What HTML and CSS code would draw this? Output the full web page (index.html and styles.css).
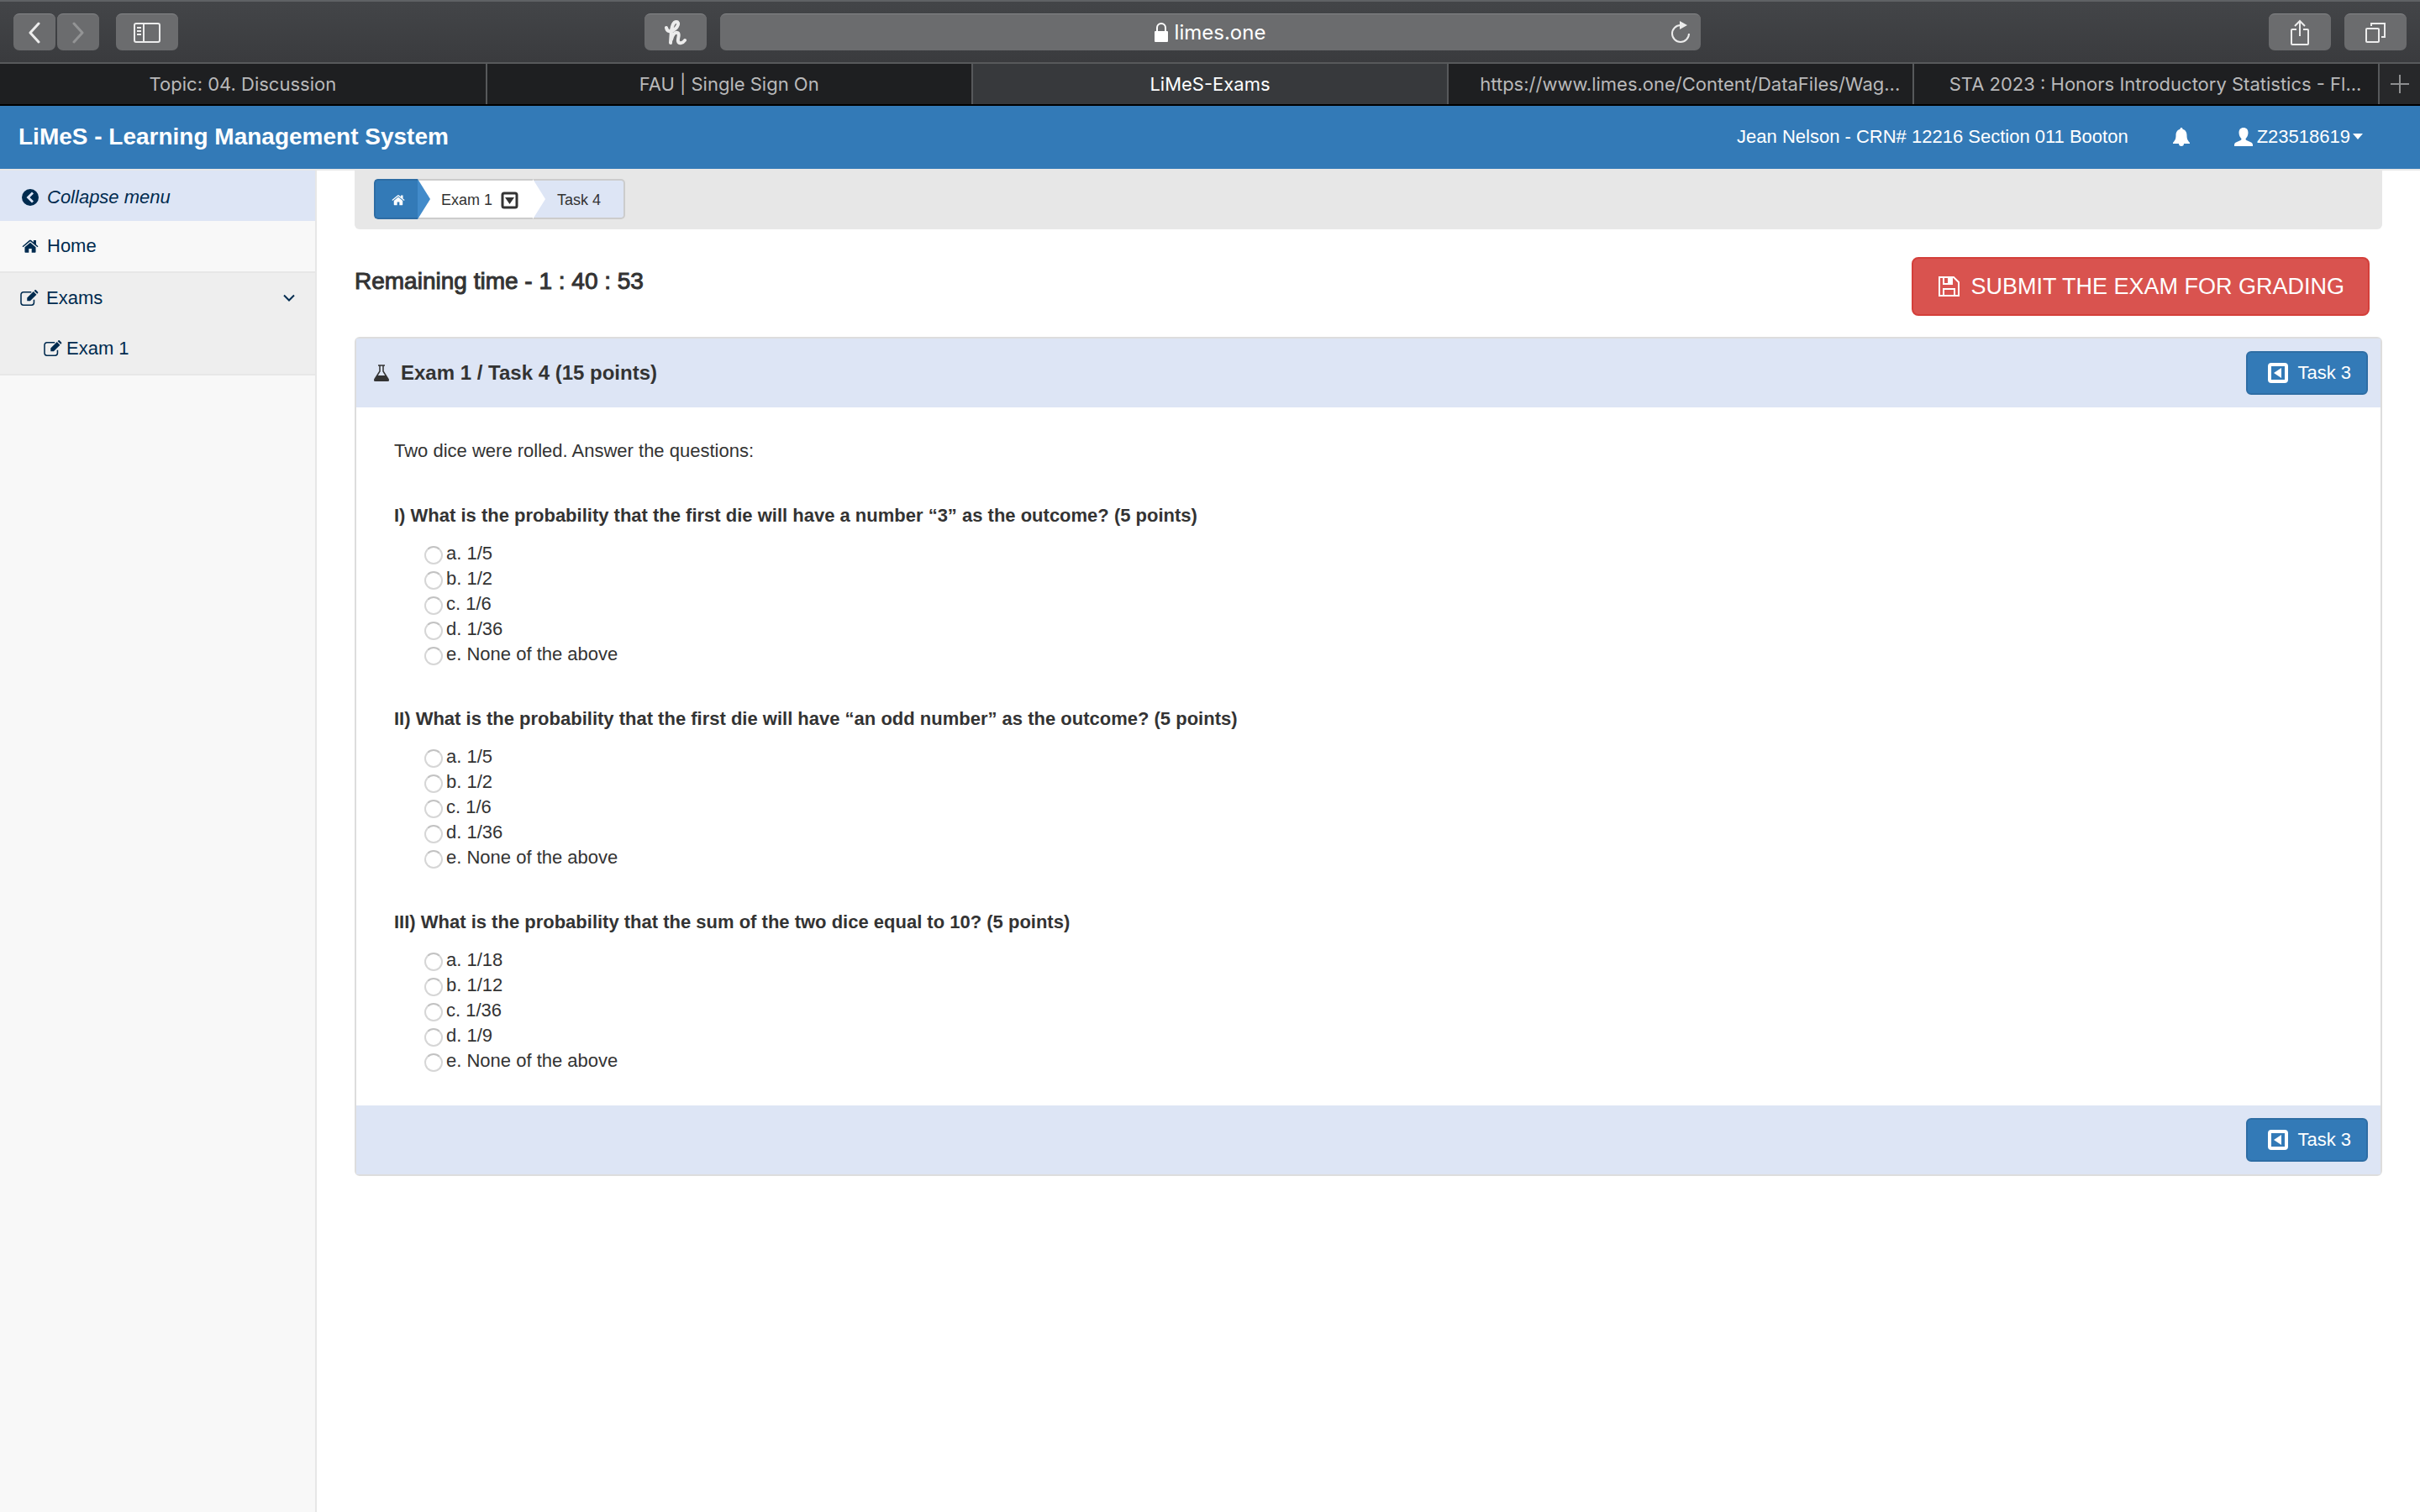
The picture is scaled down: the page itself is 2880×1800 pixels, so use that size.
FILE: index.html
```html
<!DOCTYPE html>
<html lang="en">

<head>
    <meta charset="UTF-8">
    <title>LiMeS-Exams</title>
    <link rel="stylesheet" href="styles.css">
</head>

<body>
    <svg class="sprite" aria-hidden="true">
        <symbol id="i-home" viewBox="0 0 26 22">
            <path d="M13 5.5 4.500 12.600V20c0 .6.4 1 1 1h5.300v-6h4.400v6h5.300c.6 0 1-.4 1-1v-7.400z" />
            <path d="m25.300 11.200-3.300-2.800V2h-4v3.100L14.400 2c-.8-.7-2-.7-2.800 0L.7 11.200l1.200 1.500L13 3.500l11.100 9.200z" />
        </symbol>
        <symbol id="i-edit" viewBox="0 0 24 22">
            <path d="M18 13v3.800a3.200 3.200 0 0 1-3.200 3.200H4.200A3.200 3.200 0 0 1 1 16.800V6.200A3.200 3.200 0 0 1 4.200 3h10.300" fill="none" stroke="currentColor" stroke-width="1.700" />
            <path d="M9 10.500 17.300 2.200l4 4L13 14.500H9zM18.200 1.300l.8-.8c.5-.5 1.300-.5 1.800 0l2.200 2.200c.5.5.5 1.300 0 1.800l-.8.8z" />
        </symbol>
        <symbol id="i-prev" viewBox="0 0 24 24">
            <path fill-rule="evenodd" d="M4 0h16a4 4 0 0 1 4 4v16a4 4 0 0 1-4 4H4a4 4 0 0 1-4-4V4a4 4 0 0 1 4-4zm0 4v16h16V4z" />
            <path d="M16 6v12l-9-6z" />
        </symbol>
    </svg>

    <div class="toolbar">
        <button class="tool tool-nav" aria-label="Back"><svg width="16" height="26" viewBox="0 0 16 26"><path d="M13 2 3 13l10 11" fill="none" stroke="currentColor" stroke-width="3" stroke-linecap="round" stroke-linejoin="round" /></svg></button>
        <button class="tool tool-nav tool-off" aria-label="Forward"><svg width="16" height="26" viewBox="0 0 16 26"><path d="m3 2 10 11L3 24" fill="none" stroke="currentColor" stroke-width="3" stroke-linecap="round" stroke-linejoin="round" /></svg></button>
        <button class="tool tool-side" aria-label="Show sidebar"><svg width="32" height="26" viewBox="0 0 32 26"><path d="M3 2h26a2 2 0 0 1 2 2v18a2 2 0 0 1-2 2H3a2 2 0 0 1-2-2V4a2 2 0 0 1 2-2zM12 2v22M4 7h5M4 11h5M4 15h5" fill="none" stroke="currentColor" stroke-width="2" /></svg></button>
        <div class="address-wrap">
            <button class="tool tool-ext" aria-label="Honey"><svg width="26" height="30" viewBox="0 0 26 30"><path d="M2 9c1 5 5 5 8 3 6-3 8-10 4-10-4 0-5 5-6 10l-1 15M8 23c1-5 4-9 7-8 4 1 0 7 1 10 1 4 6 2 8-1" fill="none" stroke="currentColor" stroke-width="4" stroke-linecap="round" stroke-linejoin="round" /></svg></button>
            <div class="address">
                <span class="address-url"><svg width="16" height="24" viewBox="0 0 16 24"><path d="M3 11V6a5 5 0 0 1 10 0v5" fill="none" stroke="currentColor" stroke-width="2" /><rect y="10" width="16" height="13" rx="1" fill="currentColor" /></svg>limes.one</span>
                <button class="reload" aria-label="Reload"><svg width="24" height="28" viewBox="0 0 24 28"><path d="M12 5a10 10 0 1 0 10 10" fill="none" stroke="currentColor" stroke-width="2" /><path d="M11 0v10l9-5z" fill="currentColor" /></svg></button>
            </div>
        </div>
        <button class="tool" aria-label="Share"><svg width="24" height="32" viewBox="0 0 24 32"><path d="M8 12H3a1 1 0 0 0-1 1v16a1 1 0 0 0 1 1h18a1 1 0 0 0 1-1V13a1 1 0 0 0-1-1h-5M12 20V2M6 8l6-6 6 6" fill="none" stroke="currentColor" stroke-width="2" /></svg></button>
        <button class="tool" aria-label="Show all tabs"><svg width="26" height="26" viewBox="0 0 26 26"><path d="M3 8h13a1 1 0 0 1 1 1v14a1 1 0 0 1-1 1H3a1 1 0 0 1-1-1V9a1 1 0 0 1 1-1zM8 5V2h16v16h-4" fill="none" stroke="currentColor" stroke-width="2" /></svg></button>
    </div>

    <nav class="tabs">
        <a class="tab" href="#">Topic: 04. Discussion</a>
        <a class="tab" href="#">FAU | Single Sign On</a>
        <a class="tab tab-active" href="#">LiMeS-Exams</a>
        <a class="tab tab-long" href="#">https://www.limes.one/Content/DataFiles/Wag...</a>
        <a class="tab tab-long" href="#">STA 2023 : Honors Introductory Statistics - Fl...</a>
        <button class="tab-new" aria-label="New tab"><svg width="22" height="22" viewBox="0 0 22 22"><path d="M11 0v22M0 11h22" stroke="currentColor" stroke-width="2" /></svg></button>
    </nav>

    <header class="navbar">
        <a class="brand" href="#">LiMeS - Learning Management System</a>
        <span class="course">Jean Nelson - CRN# 12216 Section 011 Booton</span>
        <a class="bell" href="#" aria-label="Notifications"><svg width="22" height="22" viewBox="0 0 22 22"><path d="M11 0c1 0 1.500.7 1.500 1.700C16 2.500 17.500 5.500 17.500 9c0 5 1.500 6.500 3.500 9v1H1v-1c2-2.500 3.500-4 3.500-9 0-3.500 1.500-6.500 5-7.300C9.500.7 10 0 11 0zM8 19h6a3 3 0 0 1-6 0z" fill="currentColor" /></svg></a>
        <a class="user" href="#"><svg width="22" height="22" viewBox="0 0 22 22"><path d="M11 0c3.500 0 5.500 2.300 5.500 6 0 3-1.300 5.300-2.700 6.700-.5.700-.3 1.700.7 2.300l5 2.300c1.500.7 2.500 1.700 2.500 3.200V22H0v-1.500c0-1.500 1-2.500 2.500-3.200l5-2.300c1-.6 1.200-1.600.7-2.300C6.800 11.300 5.500 9 5.500 6c0-3.700 2-6 5.500-6z" fill="currentColor" /></svg>Z23518619<span class="caret"></span></a>
    </header>

    <div class="page">
        <nav class="sidebar">
            <a class="side-item side-collapse" href="#"><svg width="20" height="20" viewBox="0 0 20 20"><path fill-rule="evenodd" d="M10 0a10 10 0 1 1 0 20 10 10 0 0 1 0-20zm2 3.500L5.500 10l6.500 6.500 2-2L9.500 10 14 5.500z" /></svg>Collapse menu</a>
            <a class="side-item" href="#"><svg width="20" height="18"><use href="#i-home" /></svg>Home</a>
            <div class="side-group">
                <a class="side-item" href="#"><svg width="22" height="20"><use href="#i-edit" /></svg>Exams<svg class="chevron" width="14" height="10" viewBox="0 0 14 10"><path d="m1 1.500 6 6 6-6" fill="none" stroke="currentColor" stroke-width="2" /></svg></a>
                <a class="side-item side-sub" href="#"><svg width="22" height="20"><use href="#i-edit" /></svg>Exam 1</a>
            </div>
        </nav>

        <main class="content">
            <div class="crumb-bar">
                <div class="crumbs">
                    <a class="crumb crumb-home" href="#" aria-label="Home"><svg width="16" height="14"><use href="#i-home" /></svg></a>
                    <a class="crumb crumb-exam" href="#">Exam 1<svg width="21" height="21" viewBox="0 0 21 21"><rect x="2" y="2" width="17" height="17" rx="2" fill="none" stroke="currentColor" stroke-width="3" /><path d="M5 7h11l-5.500 8z" fill="currentColor" /></svg></a>
                    <span class="crumb crumb-task">Task 4</span>
                </div>
            </div>

            <div class="status">
                <h3 class="remaining">Remaining time - 1 : 40 : 53</h3>
                <button class="btn btn-danger"><svg width="25" height="24" viewBox="0 0 25 24"><path d="M1 1h17l6 6v16H1zM6 23v-8h13v8M6 1v8h10V1" fill="none" stroke="currentColor" stroke-width="2" /><path d="M11 2h4v6h-4z" fill="currentColor" /></svg>SUBMIT THE EXAM FOR GRADING</button>
            </div>

            <section class="panel">
                <div class="panel-bar">
                    <h4 class="panel-title"><svg width="20" height="20" viewBox="0 0 20 20"><path d="M6 1h8M8 1v7L2 17.500c-.6 1 0 1.700 1 1.700h14c1 0 1.600-.7 1-1.700L12 8V1" fill="none" stroke="currentColor" stroke-width="1.500" /><path d="M5 13h10l4 6.500H1z" /></svg>Exam 1 / Task 4 (15 points)</h4>
                    <button class="btn btn-primary"><svg width="24" height="24"><use href="#i-prev" /></svg>Task 3</button>
                </div>

                <form class="panel-body">
                    <p class="intro">Two dice were rolled. Answer the questions:</p>

                    <fieldset class="question">
                        <legend>I) What is the probability that the first die will have a number “3” as the outcome? (5 points)</legend>
                        <label class="option"><input type="radio" name="q1">a. 1/5</label>
                        <label class="option"><input type="radio" name="q1">b. 1/2</label>
                        <label class="option"><input type="radio" name="q1">c. 1/6</label>
                        <label class="option"><input type="radio" name="q1">d. 1/36</label>
                        <label class="option"><input type="radio" name="q1">e. None of the above</label>
                    </fieldset>

                    <fieldset class="question">
                        <legend>II) What is the probability that the first die will have “an odd number” as the outcome? (5 points)</legend>
                        <label class="option"><input type="radio" name="q2">a. 1/5</label>
                        <label class="option"><input type="radio" name="q2">b. 1/2</label>
                        <label class="option"><input type="radio" name="q2">c. 1/6</label>
                        <label class="option"><input type="radio" name="q2">d. 1/36</label>
                        <label class="option"><input type="radio" name="q2">e. None of the above</label>
                    </fieldset>

                    <fieldset class="question">
                        <legend>III) What is the probability that the sum of the two dice equal to 10? (5 points)</legend>
                        <label class="option"><input type="radio" name="q3">a. 1/18</label>
                        <label class="option"><input type="radio" name="q3">b. 1/12</label>
                        <label class="option"><input type="radio" name="q3">c. 1/36</label>
                        <label class="option"><input type="radio" name="q3">d. 1/9</label>
                        <label class="option"><input type="radio" name="q3">e. None of the above</label>
                    </fieldset>
                </form>

                <div class="panel-bar panel-footer">
                    <button class="btn btn-primary"><svg width="24" height="24"><use href="#i-prev" /></svg>Task 3</button>
                </div>
            </section>
        </main>
    </div>
</body>

</html>
```

FILE: styles.css
```css
* {
    box-sizing: border-box;
}

body {
    margin: 0;
    min-height: 100vh;
    display: flex;
    flex-direction: column;
    background: #fff;
    color: #333;
    font-family: "Liberation Sans", Arial, sans-serif;
    font-size: 22px;
    line-height: 30px;
}

a {
    color: inherit;
    text-decoration: none;
}

button {
    font-family: inherit;
    cursor: pointer;
}

svg {
    flex: none;
    fill: currentColor;
}

.sprite {
    display: none;
}

/* Browser toolbar */
.toolbar {
    display: flex;
    align-items: center;
    height: 76px;
    padding: 0 16px;
    gap: 16px;
    background: linear-gradient(#434548, #3a3b3e);
    border-top: 2px solid #5f6265;
    border-bottom: 2px solid #57595b;
    color: #ececec;
}

.tool {
    display: flex;
    align-items: center;
    justify-content: center;
    width: 74px;
    height: 44px;
    padding: 0;
    border: 0;
    border-top: 1px solid #858688;
    border-radius: 7px;
    background: #6b6c6e;
    color: inherit;
}

.tool-nav {
    width: 50px;
}

.tool-off {
    margin-left: -14px;
    color: #939495;
}

.tool-side {
    margin-left: 4px;
}

.address-wrap {
    flex: 1;
    display: flex;
    justify-content: center;
    gap: 16px;
    padding-right: 122px;
}

.address {
    display: flex;
    align-items: center;
    width: 50%;
    height: 44px;
    padding: 0 12px;
    border-top: 1px solid #858688;
    border-radius: 7px;
    background: #6b6c6e;
}

.address-url {
    flex: 1;
    display: flex;
    align-items: center;
    justify-content: center;
    gap: 8px;
    padding-left: 24px;
    color: #fff;
    font-family: Inter, sans-serif;
    font-size: 24px;
}

.reload {
    display: flex;
    padding: 0;
    border: 0;
    background: none;
    color: inherit;
}

/* Tabs */
.tabs {
    display: grid;
    grid-template-columns: 580fr 578fr 567fr 554fr 554fr 48px;
    height: 50px;
    background: #1e1f21;
    border-bottom: 2px solid #000;
    color: #b9b9ba;
    font-family: Inter, sans-serif;
    font-size: 22px;
}

.tab {
    display: flex;
    align-items: center;
    justify-content: center;
    border-right: 2px solid #57595b;
    white-space: nowrap;
    overflow: hidden;
}

.tab-active {
    background: #37393c;
    color: #fff;
}

.tab-long {
    padding-left: 22px;
}

.tab-new {
    display: flex;
    align-items: center;
    justify-content: center;
    padding: 0;
    border: 0;
    background: #27282a;
    color: #8e8f90;
}

/* Site header */
.navbar {
    display: flex;
    align-items: center;
    height: 77px;
    padding: 0 68px 2px 22px;
    background: #337ab7;
    border-bottom: 2px solid #e7e7e7;
    color: #fff;
}

.brand {
    flex: 1;
    font-size: 28px;
    font-weight: bold;
}

.bell {
    display: flex;
    margin: 0 52px;
}

.user {
    display: flex;
    align-items: center;
    gap: 5px;
}

.caret {
    margin-left: -2px;
    border: 6px solid transparent;
    border-top: 7px solid #fff;
    border-bottom: 0;
}

.page {
    flex: 1;
    display: flex;
}

/* Sidebar */
.sidebar {
    width: 377px;
    flex: none;
    background: #f8f8f8;
    border-right: 2px solid #e7e7e7;
    color: #002b4f;
}

.side-item {
    display: flex;
    align-items: center;
    gap: 10px;
    height: 60px;
    padding: 0 24px 0 26px;
}

.side-collapse {
    padding-top: 3px;
    background: #dde5f5;
    font-style: italic;
}

.side-group {
    background: #eee;
    border-top: 2px solid #e7e7e7;
    border-bottom: 2px solid #e7e7e7;
}

.side-group .side-item {
    gap: 9px;
    padding-left: 24px;
}

.side-group .side-sub {
    gap: 5px;
    padding-left: 52px;
}

.chevron {
    margin-left: auto;
}

/* Content */
.content {
    flex: 1;
    padding: 0 45px;
}

.crumb-bar {
    display: flex;
    padding: 10px 23px 12px;
    background: #e7e7e7;
    border-radius: 0 0 6px 6px;
}

.crumbs {
    display: flex;
    height: 48px;
    border-radius: 5px;
    font-size: 18px;
}

.crumb {
    position: relative;
    display: flex;
    align-items: center;
    padding-top: 2px;
    border: 2px solid #ccc;
    border-width: 2px 0;
    background: #fff;
}

.crumb-home {
    width: 52px;
    justify-content: center;
    padding-left: 4px;
    background: #337ab7;
    border-color: #2e6da4;
    border-left-width: 2px;
    border-radius: 5px 0 0 5px;
    color: #fff;
}

/* arrow tips between the steps */
.crumb-home::after,
.crumb-exam::after {
    content: "";
    position: absolute;
    left: 100%;
    top: -2px;
    z-index: 1;
    border: 24px solid transparent;
    border-left: 15px solid #428bca;
    border-right: 0;
}

.crumb-exam::after {
    border-left-color: #fff;
}

.crumb-exam {
    gap: 10px;
    padding-left: 28px;
    padding-right: 17px;
}

.crumb-task {
    padding-left: 29px;
    padding-right: 27px;
    background: #dde5f5;
    border-right-width: 2px;
    border-radius: 0 5px 5px 0;
}

.status {
    display: flex;
    justify-content: space-between;
    align-items: flex-start;
    padding: 33px 15px 25px 0;
}

/* a weight between regular and bold */
.remaining {
    margin: 14px 0 0;
    font-size: 28px;
    font-weight: 500;
    -webkit-text-stroke: 1px #333;
}

.btn {
    display: flex;
    align-items: center;
    color: #fff;
}

.btn-danger {
    height: 70px;
    gap: 13px;
    padding: 0 28px 0 30px;
    background: #d9534f;
    border: 2px solid #d43f3a;
    border-radius: 8px;
    font-size: 27px;
}

.btn-primary {
    height: 52px;
    gap: 11px;
    padding: 0 18px 0 24px;
    background: #337ab7;
    border: 2px solid #2e6da4;
    border-radius: 6px;
    font-size: 22px;
}

.panel {
    border: 2px solid #ddd;
    border-radius: 6px;
}

.panel-bar {
    display: flex;
    align-items: center;
    justify-content: space-between;
    height: 82px;
    padding: 0 15px 0 20px;
    background: #dde5f5;
}

.panel-footer {
    justify-content: flex-end;
}

.panel-title {
    display: flex;
    align-items: center;
    gap: 13px;
    margin: 0;
    font-size: 24px;
}

.panel-body {
    padding: 37px 45px 38px;
}

.intro {
    margin: 0;
}

.question {
    margin: 47px 0 0;
    padding: 0;
    border: 0;
}

.question legend {
    margin-bottom: 15px;
    padding: 0;
    font-weight: bold;
}

.option {
    display: flex;
    width: max-content;
    margin-left: 36px;
    gap: 4px;
}

.option input {
    appearance: none;
    width: 22px;
    height: 22px;
    margin: 6px 0 0;
    border: 2px solid #d6d6d6;
    border-top-color: #c2c2c2;
    border-radius: 50%;
    background: #fff;
}
```
